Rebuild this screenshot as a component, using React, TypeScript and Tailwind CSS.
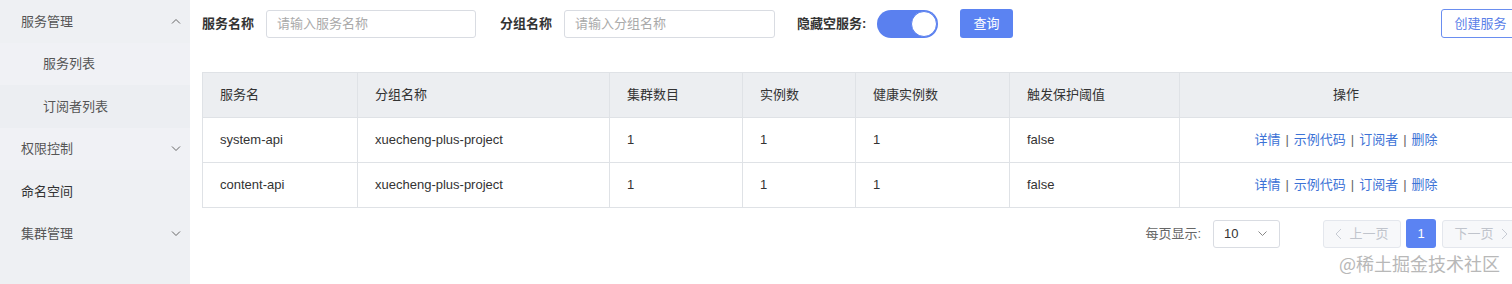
import React from "react";

const font = { fontFamily: '"Liberation Sans", "Noto Sans CJK SC", sans-serif' };

function ChevronUp() {
  return (
    <svg width="10" height="6" viewBox="0 0 10 6" fill="none" stroke="#666" strokeWidth="1">
      <path d="M1 5.5 L5 1.5 L9 5.5" />
    </svg>
  );
}
function ChevronDown({ color = "#666", w = 10, h = 6 }: { color?: string; w?: number; h?: number }) {
  return (
    <svg width={w} height={h} viewBox="0 0 10 6" fill="none" stroke={color} strokeWidth="1">
      <path d="M1 0.5 L5 4.5 L9 0.5" />
    </svg>
  );
}
function ChevronSide({ dir }: { dir: "left" | "right" }) {
  return (
    <svg width="7" height="12" viewBox="0 0 7 12" fill="none" stroke="#c8ccd4" strokeWidth="1">
      {dir === "left" ? <path d="M6 1 L1 6 L6 11" /> : <path d="M1 1 L6 6 L1 11" />}
    </svg>
  );
}

const cols = [155, 252, 133, 113, 154, 170];
const headers = ["服务名", "分组名称", "集群数目", "实例数", "健康实例数", "触发保护阈值"];
const rows = [
  ["system-api", "xuecheng-plus-project", "1", "1", "1", "false"],
  ["content-api", "xuecheng-plus-project", "1", "1", "1", "false"],
];

function Ops() {
  return (
    <div className="flex items-center justify-center gap-[5px] text-[13px]">
      <span className="text-[#3c72d6]">详情</span>
      <span className="text-[#666]">|</span>
      <span className="text-[#3c72d6]">示例代码</span>
      <span className="text-[#666]">|</span>
      <span className="text-[#3c72d6]">订阅者</span>
      <span className="text-[#666]">|</span>
      <span className="text-[#3c72d6]">删除</span>
    </div>
  );
}

export default function App() {
  return (
    <div className="relative flex w-[1512px] h-[284px] overflow-hidden bg-white" style={font}>
      {/* Sidebar */}
      <div className="w-[190px] shrink-0 h-full bg-[#eef0f3] text-[13px] text-[#555]">
        <div className="h-[42.5px] flex items-center justify-between pl-[21px] pr-[9px]">
          <span>服务管理</span>
          <ChevronUp />
        </div>
        <div className="h-[42.5px] flex items-center pl-[43px] bg-[#f0f1f5]">服务列表</div>
        <div className="h-[42.5px] flex items-center pl-[43px] bg-[#eceef2]">订阅者列表</div>
        <div className="h-[42.5px] flex items-center justify-between pl-[21px] pr-[9px] bg-[#f0f1f5]">
          <span>权限控制</span>
          <ChevronDown />
        </div>
        <div className="h-[42.5px] flex items-center pl-[21px] text-[#333]">命名空间</div>
        <div className="h-[42.5px] flex items-center justify-between pl-[21px] pr-[9px]">
          <span>集群管理</span>
          <ChevronDown />
        </div>
      </div>

      {/* Main */}
      <div className="w-[1330px] shrink-0 pl-[12px]">
        {/* Toolbar */}
        <div className="h-[48px] pt-[9px] flex items-start text-[13px]">
          <div className="flex items-center h-[29px]">
            <span className="font-bold text-[#333] w-[64px]">服务名称</span>
            <div className="w-[210px] h-[28px] border border-[#d9dce2] rounded-[3px] flex items-center pl-[10px] text-[#aaa]">
              请输入服务名称
            </div>
            <span className="font-bold text-[#333] ml-[24px] w-[64px]">分组名称</span>
            <div className="w-[211px] h-[28px] border border-[#d9dce2] rounded-[3px] flex items-center pl-[10px] text-[#aaa]">
              请输入分组名称
            </div>
            <span className="font-bold text-[#333] ml-[22px] w-[80px]">隐藏空服务:</span>
            <div className="w-[61px] h-[28px] rounded-full bg-[#5a80ef] flex items-center justify-end pr-[1px]">
              <div className="w-[26px] h-[26px] rounded-full bg-white border border-[#5a80ef]" />
            </div>
            <div className="ml-[22px] w-[53px] h-[29px] rounded-[3px] bg-[#5b83f2] text-white flex items-center justify-center">
              查询
            </div>
          </div>
          <div className="ml-auto w-[79px] h-[29px] border border-[#6a8ef0] rounded-[3px] text-[#5b7fe8] flex items-center justify-center">
            创建服务
          </div>
        </div>

        {/* Table */}
        <div className="mt-[24px] w-[1310px] border-b border-[#dfe2e6]">
          <div className="flex h-[45px] bg-[#eceef1] border-t border-l border-[#dfe2e6] text-[13px] text-[#333]">
            {headers.map((h, i) => (
              <div
                key={h}
                className="h-full flex items-center pl-[17px] border-r border-[#dfe2e6]"
                style={{ width: cols[i] }}
              >
                {h}
              </div>
            ))}
            <div className="flex-1 h-full flex items-center justify-center">操作</div>
          </div>
          {rows.map((r, ri) => (
            <div key={ri} className="flex h-[45px] border-t border-l border-[#dfe2e6] text-[13px] text-[#333]">
              {r.map((c, i) => (
                <div
                  key={i}
                  className="h-full flex items-center pl-[17px] border-r border-[#dfe2e6]"
                  style={{ width: cols[i] }}
                >
                  {c}
                </div>
              ))}
              <div className="flex-1 h-full flex items-center justify-center">
                <Ops />
              </div>
            </div>
          ))}
        </div>

        {/* Pagination */}
        <div className="mt-[11px] flex items-center justify-end text-[13px]">
          <span className="text-[#666] mr-[12px]">每页显示:</span>
          <div className="w-[67px] h-[28px] border border-[#d9dce2] rounded-[3px] flex items-center justify-between pl-[10px] pr-[11px] text-[#333]">
            <span>10</span>
            <ChevronDown color="#888" w={11} h={6} />
          </div>
          <div className="ml-[43px] w-[78px] h-[28px] border border-[#e4e7ed] bg-[#f7f8fa] rounded-[3px] flex items-center justify-center gap-[7px] text-[#c0c4cc]">
            <ChevronSide dir="left" />
            <span>上一页</span>
          </div>
          <div className="ml-[5px] w-[30px] h-[29px] bg-[#5b83f2] rounded-[3px] text-white flex items-center justify-center">
            1
          </div>
          <div className="ml-[6px] w-[78px] h-[28px] border border-[#e4e7ed] bg-[#f7f8fa] rounded-[3px] flex items-center justify-center gap-[7px] text-[#c0c4cc]">
            <span>下一页</span>
            <ChevronSide dir="right" />
          </div>
        </div>
      </div>

      {/* Watermark overlay */}
      <div className="absolute left-[1339px] top-[250px] text-[18px] text-[#b8b8b8]" style={{ fontFamily: '"Noto Sans CJK SC", sans-serif' }}>
        @稀土掘金技术社区
      </div>
    </div>
  );
}
